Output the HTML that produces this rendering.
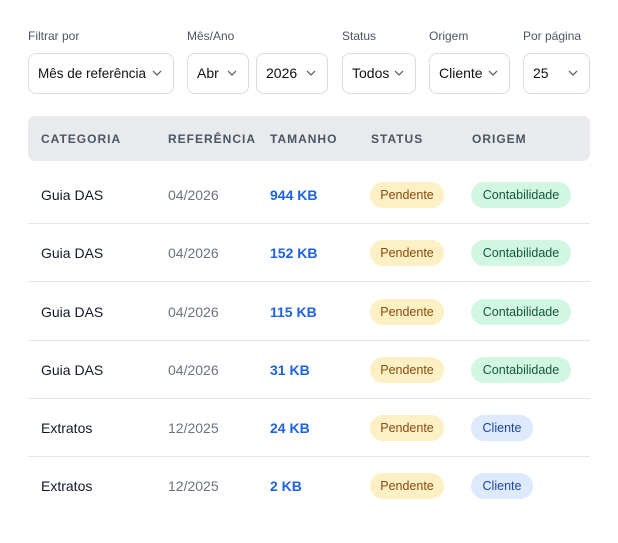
<!DOCTYPE html>
<html><head><meta charset="utf-8"><style>
*{box-sizing:border-box;margin:0;padding:0}
body{width:618px;height:543px;background:#fff;font-family:"Liberation Sans",sans-serif;position:relative;overflow:hidden;color:#111827}
.lbl{position:absolute;top:29px;font-size:12px;color:#4b5563}
.sel{position:absolute;top:53px;height:41px;border:1px solid #d9dce1;border-radius:8px;font-size:14px;line-height:39px;padding-left:9px;color:#111}
.sel svg{position:absolute;top:15px;right:11px}
.hdr{position:absolute;left:28px;top:116px;width:562px;height:45px;background:#e8eaed;border-radius:7px}
.h{position:absolute;top:132px;font-size:12px;font-weight:bold;letter-spacing:1px;color:#4b5563}
.row{position:absolute;left:28px;width:562px;height:58px;border-bottom:1px solid #e5e7eb}
.c{position:absolute;font-size:14px;top:21px}
.b{position:absolute;top:16px;height:26px;border-radius:13px;font-size:12.5px;line-height:26px;text-align:center}
.p{left:342px;width:74px;background:#fdf0c4;color:#8a4a10}
.k{left:443px;width:100px;background:#d1f7e2;color:#14573c}
.cl{left:443px;width:62px;background:#dde9fd;color:#1e46a8}
</style></head><body>
<div class="lbl" style="left:28px">Filtrar por</div>
<div class="lbl" style="left:187px">Mês/Ano</div>
<div class="lbl" style="left:342px">Status</div>
<div class="lbl" style="left:429px">Origem</div>
<div class="lbl" style="left:523px">Por página</div>
<div class="sel" style="left:28px;width:146px;font-size:13.5px">Mês de referência<svg width="10" height="8" viewBox="0 0 10 8"><path d="M1 2l4 4 4-4" fill="none" stroke="#555" stroke-width="1.2"/></svg></div>
<div class="sel" style="left:187px;width:62px">Abr<svg width="10" height="8" viewBox="0 0 10 8"><path d="M1 2l4 4 4-4" fill="none" stroke="#555" stroke-width="1.2"/></svg></div>
<div class="sel" style="left:256px;width:72px">2026<svg width="10" height="8" viewBox="0 0 10 8"><path d="M1 2l4 4 4-4" fill="none" stroke="#555" stroke-width="1.2"/></svg></div>
<div class="sel" style="left:342px;width:74px">Todos<svg width="10" height="8" viewBox="0 0 10 8"><path d="M1 2l4 4 4-4" fill="none" stroke="#555" stroke-width="1.2"/></svg></div>
<div class="sel" style="left:429px;width:81px">Cliente<svg width="10" height="8" viewBox="0 0 10 8"><path d="M1 2l4 4 4-4" fill="none" stroke="#555" stroke-width="1.2"/></svg></div>
<div class="sel" style="left:523px;width:67px">25<svg width="10" height="8" viewBox="0 0 10 8"><path d="M1 2l4 4 4-4" fill="none" stroke="#555" stroke-width="1.2"/></svg></div>
<div class="hdr"></div>
<div class="h" style="left:41px">CATEGORIA</div>
<div class="h" style="left:168px">REFERÊNCIA</div>
<div class="h" style="left:270px">TAMANHO</div>
<div class="h" style="left:371px">STATUS</div>
<div class="h" style="left:472px">ORIGEM</div>

<div class="row" style="top:166px"><div class="c" style="left:13px">Guia DAS</div><div class="c" style="left:140px;color:#6b7280">04/2026</div><div class="c" style="left:242px;color:#1d63e0;font-weight:bold">944 KB</div><div class="b p">Pendente</div><div class="b k">Contabilidade</div></div>
<div class="row" style="top:224px"><div class="c" style="left:13px">Guia DAS</div><div class="c" style="left:140px;color:#6b7280">04/2026</div><div class="c" style="left:242px;color:#1d63e0;font-weight:bold">152 KB</div><div class="b p">Pendente</div><div class="b k">Contabilidade</div></div>
<div class="row" style="top:283px"><div class="c" style="left:13px">Guia DAS</div><div class="c" style="left:140px;color:#6b7280">04/2026</div><div class="c" style="left:242px;color:#1d63e0;font-weight:bold">115 KB</div><div class="b p">Pendente</div><div class="b k">Contabilidade</div></div>
<div class="row" style="top:341px"><div class="c" style="left:13px">Guia DAS</div><div class="c" style="left:140px;color:#6b7280">04/2026</div><div class="c" style="left:242px;color:#1d63e0;font-weight:bold">31 KB</div><div class="b p">Pendente</div><div class="b k">Contabilidade</div></div>
<div class="row" style="top:399px"><div class="c" style="left:13px">Extratos</div><div class="c" style="left:140px;color:#6b7280">12/2025</div><div class="c" style="left:242px;color:#1d63e0;font-weight:bold">24 KB</div><div class="b p">Pendente</div><div class="b cl">Cliente</div></div>
<div class="row" style="top:457px;border-bottom:none"><div class="c" style="left:13px">Extratos</div><div class="c" style="left:140px;color:#6b7280">12/2025</div><div class="c" style="left:242px;color:#1d63e0;font-weight:bold">2 KB</div><div class="b p">Pendente</div><div class="b cl">Cliente</div></div>
</body></html>
